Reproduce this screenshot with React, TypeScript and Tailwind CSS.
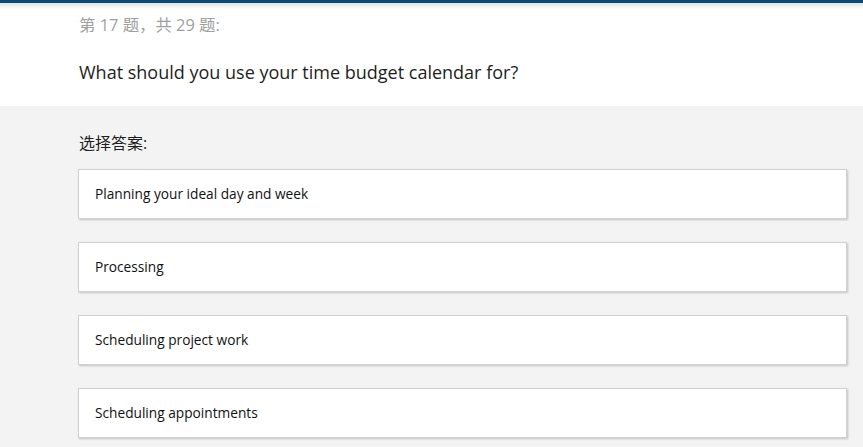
import React from "react";

const options = [
  "Planning your ideal day and week",
  "Processing",
  "Scheduling project work",
  "Scheduling appointments",
];

export default function App() {
  return (
    <div
      className="w-[863px] h-[447px] overflow-hidden bg-[#f3f3f3]"
      style={{ fontFamily: '"Segoe UI", "Open Sans", "Noto Sans CJK SC", sans-serif' }}
    >
      <div className="relative bg-white h-[106px]">
        <div className="h-[3px] bg-[#0b4a74]" />
        <div className="h-[6px] bg-gradient-to-b from-[#e2e2e2] to-white" />
        <div className="pl-[79px]">
          <div className="text-[16.4px] leading-[22px] text-[#a0a0a0] mt-[5px]">第 17 题，共 29 题:</div>
          <div className="mt-[24px] text-[18px] leading-[24px] text-[#1e1e1e]">
            What should you use your time budget calendar for?
          </div>
        </div>
      </div>
      <div className="pl-[78px] pr-[16px] pt-[26px]">
        <div className="text-[16px] leading-[22px] text-[#1e1e1e] pl-[1px]">选择答案:</div>
        <div className="mt-[15px] flex flex-col gap-[23px]">
          {options.map((o) => (
            <div
              key={o}
              className="h-[50px] bg-white border border-[#d0d0d0] shadow-[1px_1px_2px_rgba(0,0,0,0.2)] flex items-center pl-[16px] text-[13.7px] text-[#111]"
            >
              {o}
            </div>
          ))}
        </div>
      </div>
    </div>
  );
}
